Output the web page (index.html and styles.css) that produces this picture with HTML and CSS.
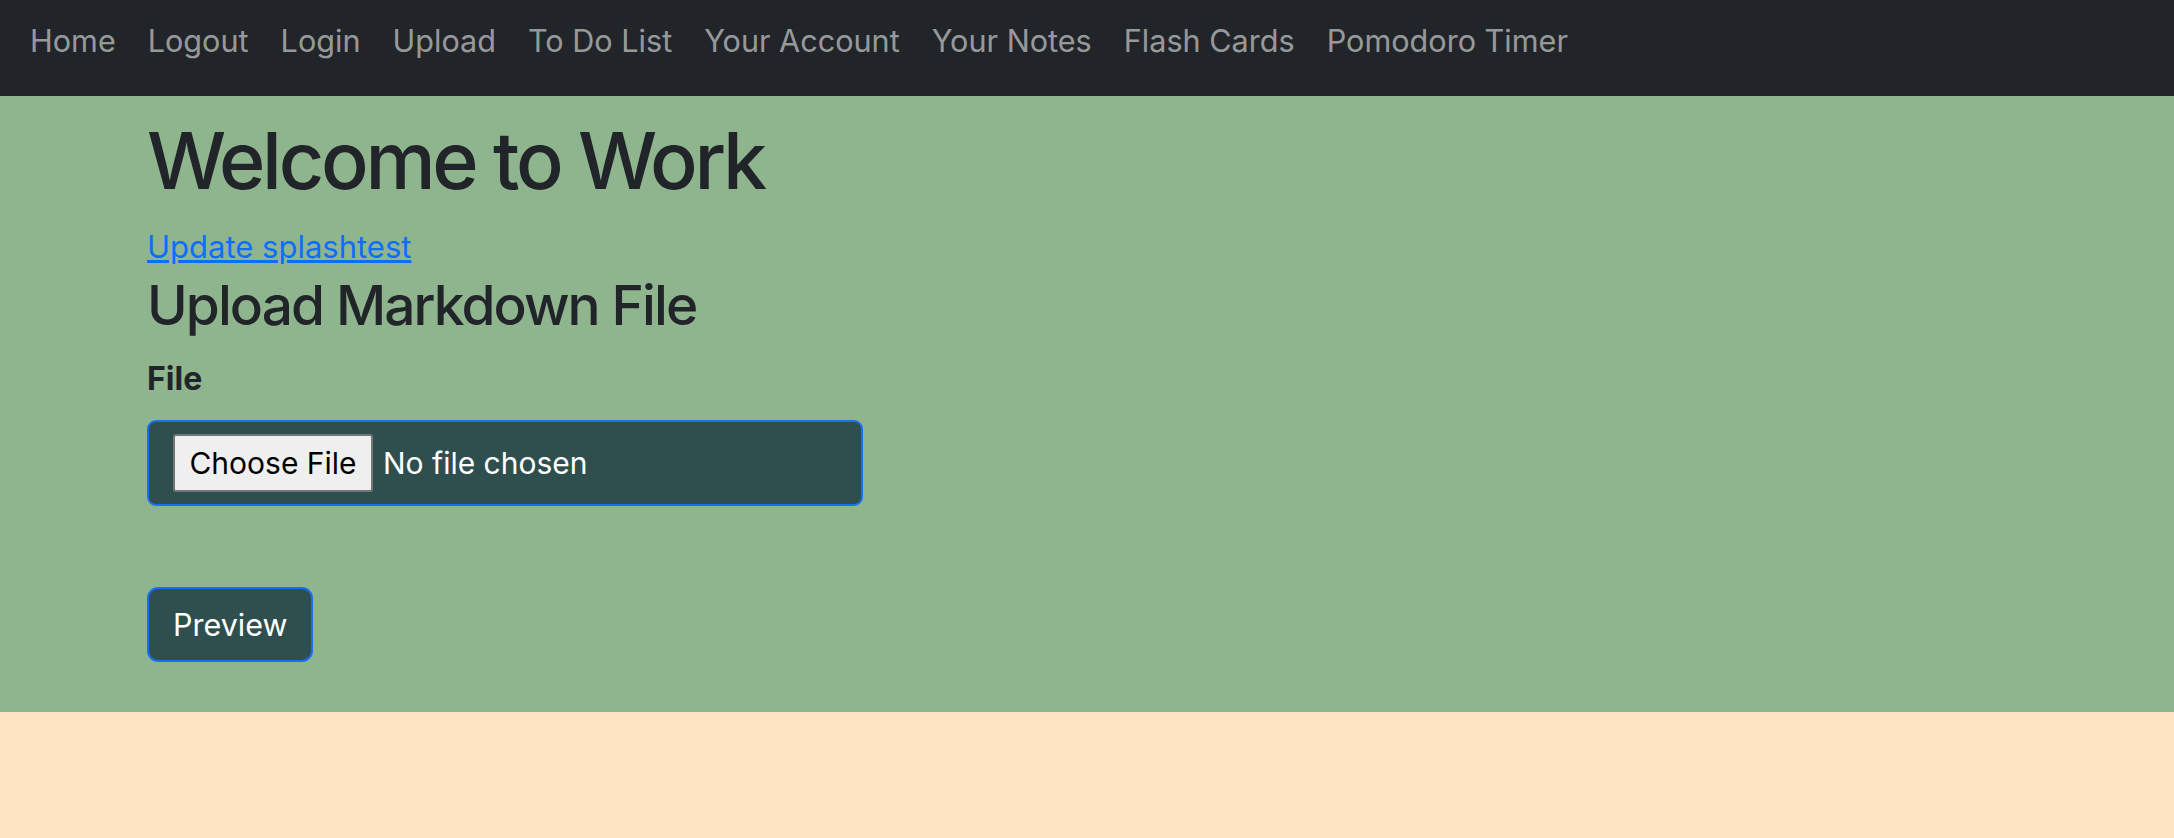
FILE: index.html
```html
<!DOCTYPE html>
<html lang="en">
<head>
<meta charset="utf-8">
<title>Upload</title>
<link rel="stylesheet" href="styles.css">
</head>
<body>
<nav class="navbar">
  <a class="nav-link" href="#">Home</a>
  <a class="nav-link" href="#">Logout</a>
  <a class="nav-link" href="#">Login</a>
  <a class="nav-link" href="#">Upload</a>
  <a class="nav-link" href="#">To Do List</a>
  <a class="nav-link" href="#">Your Account</a>
  <a class="nav-link" href="#">Your Notes</a>
  <a class="nav-link" href="#">Flash Cards</a>
  <a class="nav-link" href="#">Pomodoro Timer</a>
</nav>
<main class="main">
  <div class="container">
    <h1 class="title">Welcome to Work</h1>
    <a class="update-link" href="#">Update splashtest</a>
    <h2 class="subtitle">Upload Markdown File</h2>
    <form class="upload-form">
      <label class="field-label">File</label>
      <div class="file-input">
        <span class="file-btn">Choose File</span>
        <span class="file-name">No file chosen</span>
      </div>
      <button class="preview-btn" type="button">Preview</button>
    </form>
  </div>
</main>
</body>
</html>
```
FILE: styles.css
```css
html, body {
  margin: 0;
  padding: 0;
}
body {
  background: #ffe4c4;
  font-family: Inter, "Liberation Sans", sans-serif;
  color: #212529;
}
.navbar {
  display: flex;
  align-items: center;
  background: #212529;
  height: 96px;
  box-sizing: border-box;
  padding: 17px 0 31px 14px;
}
.nav-link {
  color: rgba(255, 255, 255, 0.55);
  text-decoration: none;
  font-size: 30.6px;
  line-height: 48px;
  padding: 0 16px;
}
.main {
  background: #8fb58f;
  padding: 16px 0 50px;
}
.container {
  box-sizing: border-box;
  max-width: 1920px;
  margin: 0 auto;
  padding: 0 20px;
}
.title {
  margin: 0 0 15px;
  font-size: 79px;
  line-height: 96px;
  font-weight: 500;
  letter-spacing: -3.3px;
}
.update-link {
  display: block;
  width: max-content;
  font-size: 31px;
  line-height: 48px;
  color: #0d6efd;
  text-decoration: underline;
}
.subtitle {
  margin: 1px 0 17px;
  font-size: 55px;
  line-height: 66px;
  font-weight: 500;
  letter-spacing: -1.9px;
}
.upload-form {
  display: flex;
  flex-direction: column;
  align-items: flex-start;
}
.field-label {
  font-size: 32px;
  line-height: 48px;
  font-weight: 700;
  margin-bottom: 17px;
}
.file-input {
  box-sizing: border-box;
  width: 716px;
  height: 86px;
  display: flex;
  align-items: center;
  padding: 0 24px;
  background: #2f4f4f;
  border: 2px solid #1a6ef5;
  border-radius: 9px;
}
.file-btn {
  box-sizing: border-box;
  height: 58px;
  width: 200px;
  display: flex;
  align-items: center;
  justify-content: center;
  background: #efefef;
  border: 2px solid #767676;
  border-radius: 3px;
  color: #000;
  font-size: 30px;
}
.file-name {
  margin-left: 10px;
  color: #fff;
  font-size: 30px;
}
.preview-btn {
  margin-top: 81px;
  box-sizing: border-box;
  height: 75px;
  padding: 0 24px;
  background: #2f4f4f;
  border: 2px solid #1a6ef5;
  border-radius: 11px;
  color: #fff;
  font-family: inherit;
  font-size: 30.5px;
}
```
